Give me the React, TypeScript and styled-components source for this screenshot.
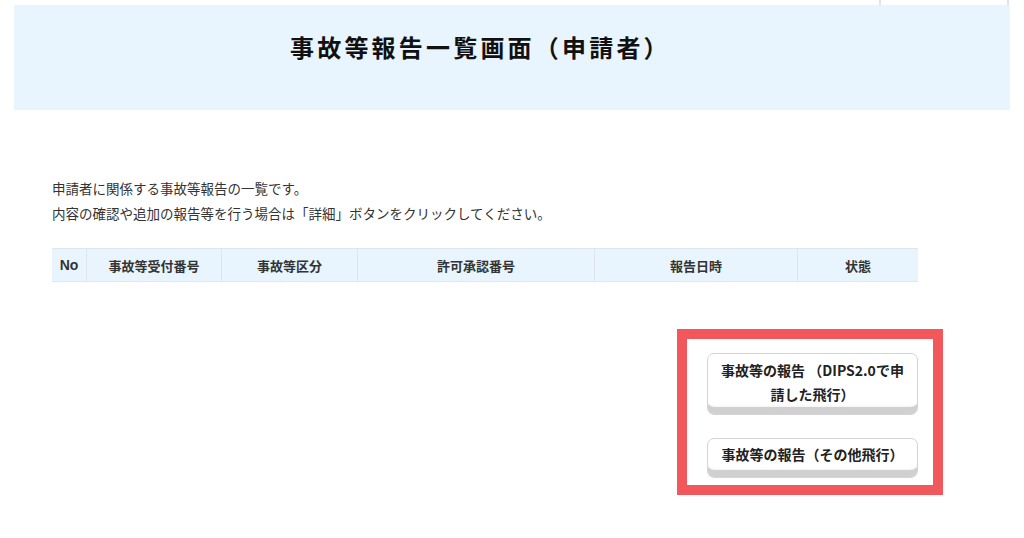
import React from "react";
import styled, { createGlobalStyle } from "styled-components";

const GlobalStyle = createGlobalStyle`
  html, body { margin: 0; padding: 0; background: #fff; }
  body {
    font-family: "Noto Sans CJK JP", "Noto Sans", sans-serif;
    color: #333;
  }
`;

const Page = styled.div`
  width: 1024px;
  height: 538px;
  overflow: hidden;
  display: flex;
  flex-direction: column;
`;

const TopStrip = styled.div`
  height: 5px;
  display: flex;
  padding-left: 879px;
`;

const StripFrame = styled.div`
  width: 126px;
  border-left: 2px solid #e2e2e2;
  border-right: 2px solid #e2e2e2;
`;

const Header = styled.header`
  margin: 0 14px;
  height: 105px;
  background: #e8f5fe;
  display: flex;
  align-items: flex-start;
  padding-left: 276px;
  box-sizing: border-box;
`;

const Title = styled.h1`
  margin: 26px 0 0;
  font-size: 24px;
  font-weight: 700;
  letter-spacing: 3.2px;
  line-height: 32px;
  color: #111;
`;

const Content = styled.main`
  padding: 66px 0 0 52px;
  display: flex;
  flex-direction: column;
`;

const Lead = styled.p`
  margin: 0;
  font-size: 13.5px;
  line-height: 25px;
  color: #333;
`;

const Table = styled.div`
  margin-top: 22px;
  width: 866px;
  display: grid;
  grid-template-columns: 34px 135px 136px 237px 203px 121px;
  background: #e8f5fe;
  border-top: 1px solid #e0e6eb;
  border-bottom: 1px solid #e0e6eb;
`;

const HeadCell = styled.div<{ $first?: boolean }>`
  height: 32px;
  display: flex;
  align-items: center;
  justify-content: center;
  font-size: 13px;
  font-weight: 700;
  color: #333;
  border-left: ${(p) => (p.$first ? "none" : "1px solid #dfe5ea")};
  box-sizing: border-box;
`;

const NoText = styled.span`
  font-family: "Liberation Sans", Arial, sans-serif;
  font-size: 14px;
`;

const ActionRow = styled.div`
  display: flex;
  justify-content: flex-end;
  padding-right: 81px;
  margin-top: 47px;
`;

const Highlight = styled.div`
  width: 266px;
  box-sizing: border-box;
  border: 10px solid #f2585b;
  padding: 14px 14px 7px 20px;
  display: flex;
  flex-direction: column;
  gap: 23px;
`;

const ActionButton = styled.button<{ $tall?: boolean }>`
  width: 211px;
  height: ${(p) => (p.$tall ? "62px" : "40px")};
  box-sizing: border-box;
  background: #fff;
  border: 1px solid #d4d4d4;
  border-radius: 7px;
  box-shadow: inset 0 -8px 0 -1px #d0d0d0, inset 0 -9px 3px -2px #e4e4e4;
  padding: ${(p) => (p.$tall ? "4px 6px 10px" : "0 6px 8px")};
  font-family: "Noto Sans CJK JP", "Noto Sans", sans-serif;
  font-size: 14px;
  font-weight: 700;
  line-height: 24px;
  color: #222;
  text-align: center;
  cursor: pointer;
`;

const columns = ["事故等受付番号", "事故等区分", "許可承認番号", "報告日時", "状態"];

export default function App() {
  return (
    <Page>
      <GlobalStyle />
      <TopStrip>
        <StripFrame />
      </TopStrip>
      <Header>
        <Title>事故等報告一覧画面（申請者）</Title>
      </Header>
      <Content>
        <Lead>申請者に関係する事故等報告の一覧です。</Lead>
        <Lead>内容の確認や追加の報告等を行う場合は「詳細」ボタンをクリックしてください。</Lead>
        <Table>
          <HeadCell $first>
            <NoText>No</NoText>
          </HeadCell>
          {columns.map((c) => (
            <HeadCell key={c}>{c}</HeadCell>
          ))}
        </Table>
      </Content>
      <ActionRow>
        <Highlight>
          <ActionButton $tall>
            事故等の報告 （DIPS2.0で申
            <br />
            請した飛行）
          </ActionButton>
          <ActionButton>事故等の報告（その他飛行）</ActionButton>
        </Highlight>
      </ActionRow>
    </Page>
  );
}
